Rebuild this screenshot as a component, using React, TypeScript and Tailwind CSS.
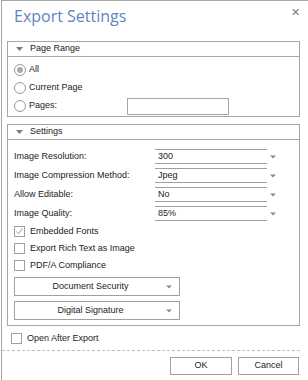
import React from "react";

const Arrow = () => (
  <svg width="6" height="4" viewBox="0 0 6 4" className="shrink-0">
    <path d="M0 0.5h6L3 3.5z" fill="#8a8a8a" />
  </svg>
);

function GroupHeader({ title }: { title: string }) {
  return (
    <div className="flex h-[15px] items-center border-b border-[#a6a6a6] pl-[8px]">
      <svg width="7" height="4" viewBox="0 0 7 4">
        <path d="M0 0h7L3.5 4z" fill="#7a7a7a" />
      </svg>
      <span className="ml-[7px]">{title}</span>
    </div>
  );
}

function Radio({ checked, label }: { checked?: boolean; label: string }) {
  return (
    <div className="flex h-[18px] items-center">
      <span className="flex h-[12px] w-[12px] items-center justify-center rounded-full border border-[#9a9a9a] bg-white">
        {checked && <span className="h-[6px] w-[6px] rounded-full bg-[#a9a9a9]" />}
      </span>
      <span className="ml-[3px]">{label}</span>
    </div>
  );
}

function Check({ checked, label }: { checked?: boolean; label: string }) {
  return (
    <div className="flex h-[17px] items-center">
      <span className="flex h-[11px] w-[11px] items-center justify-center border border-[#a0a0a0] bg-white">
        {checked && (
          <svg width="9" height="9" viewBox="0 0 9 9">
            <path d="M1.5 4.5l2 2.2L7.5 1.5" fill="none" stroke="#9a9a9a" strokeWidth="1" />
          </svg>
        )}
      </span>
      <span className="ml-[5px]">{label}</span>
    </div>
  );
}

function Field({ label, value }: { label: string; value: string }) {
  return (
    <div className="flex h-[19px] items-center">
      <span className="w-[141px]">{label}</span>
      <div className="flex h-[15px] w-[112px] items-center border-y border-[#a0a0a0] pl-[3px]">
        {value}
      </div>
      <span className="ml-[3px] flex w-[6px]">
        <Arrow />
      </span>
    </div>
  );
}

function MenuButton({ label }: { label: string }) {
  return (
    <div className="flex h-[19px] w-[166px] items-center border border-[#a0a0a0] bg-white">
      <span className="flex-1 text-center">{label}</span>
      <span className="mr-[7px]">
        <Arrow />
      </span>
    </div>
  );
}

export default function App() {
  return (
    <div className="h-[380px] w-[308px] overflow-hidden bg-white font-['Liberation_Sans',Arial,sans-serif] text-[9px] text-[#222]">
      <div className="ml-px h-[380px] w-[307px] border-l border-t border-[#a6a6a6]">
        <div className="flex h-[40px] items-start justify-between pl-[12px] pr-[8px]">
          <h1 className="mt-[5px] font-['Open_Sans',sans-serif] text-[16px] leading-[20px] text-[#5f84c4]">
            Export Settings
          </h1>
          <span className="mt-[5px] text-[11px] leading-[12px] text-[#7b7b7b]">✕</span>
        </div>

        <div className="ml-[5px] w-[293px] border border-[#a6a6a6]">
          <GroupHeader title="Page Range" />
          <div className="px-[6px] pb-[1px] pt-[4px]">
            <Radio checked label="All" />
            <Radio label="Current Page" />
            <div className="flex items-center">
              <Radio label="Pages:" />
              <div className="ml-[70px] h-[17px] w-[102px] border border-[#a6a6a6]" />
            </div>
          </div>
        </div>

        <div className="ml-[5px] mt-[7px] w-[293px] border border-[#a6a6a6]">
          <GroupHeader title="Settings" />
          <div className="px-[6px] pb-[5px] pt-[7px]">
            <Field label="Image Resolution:" value="300" />
            <Field label="Image Compression Method:" value="Jpeg" />
            <Field label="Allow Editable:" value="No" />
            <Field label="Image Quality:" value="85%" />
            <Check checked label="Embedded Fonts" />
            <Check label="Export Rich Text as Image" />
            <Check label="PDF/A Compliance" />
            <div className="mt-[3px] flex flex-col gap-[5px]">
              <MenuButton label="Document Security" />
              <MenuButton label="Digital Signature" />
            </div>
          </div>
        </div>

        <div className="ml-[9px] mt-[4px]">
          <Check label="Open After Export" />
        </div>

        <div className="mt-[3px] w-[298px] border-t border-dashed border-[#c0c0c0]" />

        <div className="mt-[6px] flex w-[297px] justify-end gap-[6px]">
          <button className="h-[18px] w-[62px] border border-[#a0a0a0] bg-white">OK</button>
          <button className="h-[18px] w-[61px] border border-[#a0a0a0] bg-white">Cancel</button>
        </div>
      </div>
    </div>
  );
}
